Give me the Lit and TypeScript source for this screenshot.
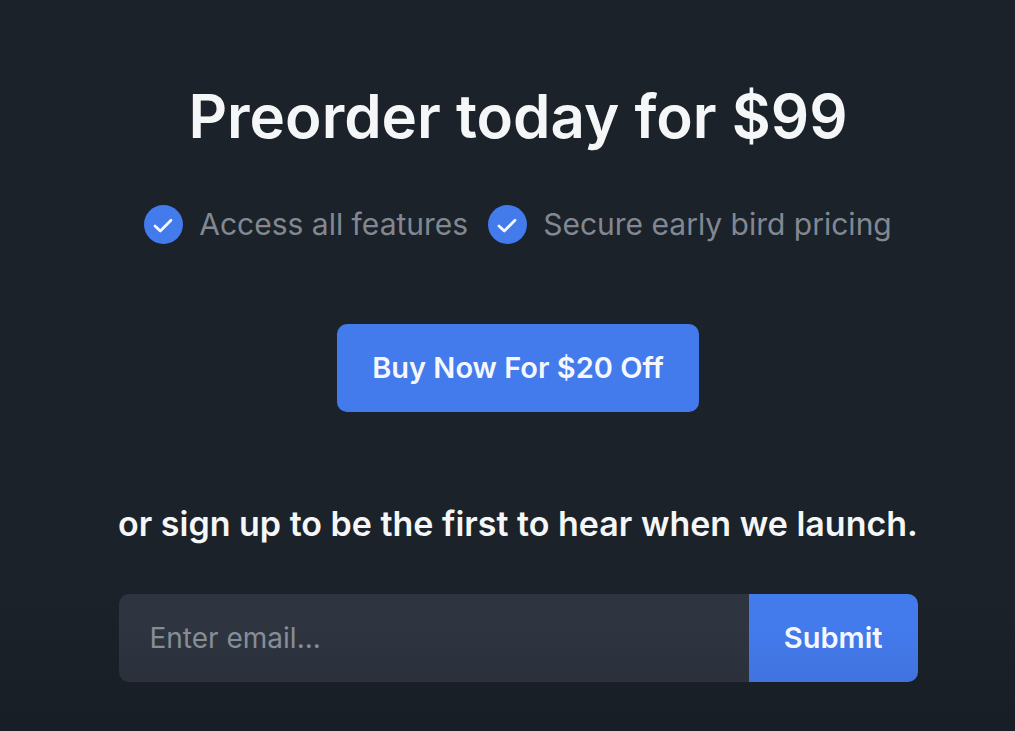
import { LitElement, html, css } from "lit";
import { customElement } from "lit/decorators.js";

const features = ["Access all features", "Secure early bird pricing"];

@customElement("app-root")
export class AppRoot extends LitElement {
  static styles = css`
    :host {
      display: block;
      min-height: 100vh;
      box-sizing: border-box;
      background: linear-gradient(to bottom, #1b2229 calc(100% - 140px), #181e25);
      color: #f4f6f7;
      font-family: Inter, sans-serif;
    }
    *,
    *::before,
    *::after {
      box-sizing: border-box;
    }
    .preorder {
      display: flex;
      flex-direction: column;
      align-items: center;
      padding: 80px 60px 48px 81px;
    }
    .title {
      margin: 0;
      font-size: 60px;
      line-height: 72px;
      font-weight: 600;
      text-align: center;
    }
    .features {
      display: flex;
      flex-wrap: wrap;
      justify-content: center;
      gap: 20px;
      margin: 52px 0 80px;
      padding: 0;
      list-style: none;
      color: #828892;
      font-size: 30px;
      line-height: 40px;
    }
    .feature {
      display: flex;
      align-items: center;
      gap: 16px;
    }
    .check {
      width: 39px;
      height: 39px;
      flex: none;
    }
    .button {
      height: 88px;
      border: 0;
      padding: 0 35px;
      background: #437aec;
      color: #f4f7fe;
      font: 600 29px/36px Inter, sans-serif;
      cursor: pointer;
    }
    .buy {
      border-radius: 10px;
    }
    .lead {
      margin: 92px 0 50px;
      font-size: 34px;
      line-height: 40px;
      font-weight: 600;
      text-align: center;
    }
    .signup {
      display: flex;
      width: 100%;
      max-width: 799px;
      border-radius: 10px;
      overflow: hidden;
    }
    .submit {
      background: linear-gradient(to bottom, #437aec 40%, #4173de);
    }
    .email {
      flex: 1;
      min-width: 0;
      height: 88px;
      border: 0;
      border-radius: 0;
      padding: 0 31px;
      background: linear-gradient(to bottom, #2e3540 40%, #2b303b);
      color: #f4f6f7;
      font: 400 28px/36px Inter, sans-serif;
    }
    .email::placeholder {
      color: #868d97;
      opacity: 1;
    }
  `;

  render() {
    return html`
      <main class="preorder">
        <h1 class="title">Preorder today for $99</h1>
        <ul class="features">
          ${features.map(
            (text) => html`
              <li class="feature">
                <svg class="check" viewBox="0 0 39 39" aria-hidden="true">
                  <circle cx="19.5" cy="19.5" r="19.5" fill="#437aec" />
                  <path
                    d="M11 21l5.3 5L27 15.3"
                    fill="none"
                    stroke="#f4f7fe"
                    stroke-width="2.8"
                    stroke-linecap="round"
                    stroke-linejoin="round"
                  />
                </svg>
                <span>${text}</span>
              </li>
            `
          )}
        </ul>
        <button class="button buy" type="button">Buy Now For $20 Off</button>
        <p class="lead">or sign up to be the first to hear when we launch.</p>
        <form class="signup" @submit=${(e: Event) => e.preventDefault()}>
          <input class="email" type="email" aria-label="Email" placeholder="Enter email..." />
          <button class="button submit" type="submit">Submit</button>
        </form>
      </main>
    `;
  }
}
